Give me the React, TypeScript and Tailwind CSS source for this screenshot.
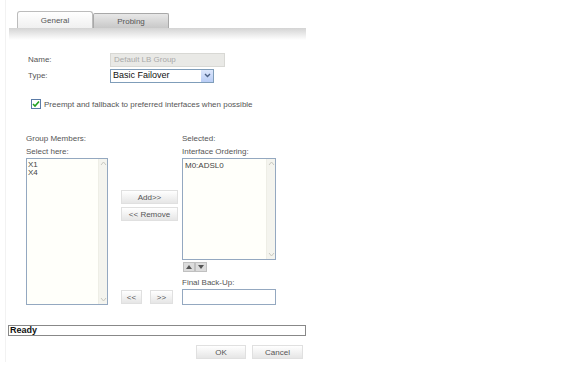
import React from 'react'

function Scrollbar() {
  return (
    <div className="flex flex-col w-[9px] bg-[#f4f4ee] border-l border-[#eeeee6]">
      <div className="h-[9px] flex items-center justify-center text-[#c8c8c0]">
        <svg width="7" height="5" viewBox="0 0 7 5"><path d="M1 4 L3.5 1 L6 4" stroke="currentColor" fill="none" /></svg>
      </div>
      <div className="flex-1" />
      <div className="h-[9px] flex items-center justify-center text-[#c8c8c0]">
        <svg width="7" height="5" viewBox="0 0 7 5"><path d="M1 1 L3.5 4 L6 1" stroke="currentColor" fill="none" /></svg>
      </div>
    </div>
  )
}

function Btn({ label, w }: { label: string; w: string }) {
  return (
    <div className={`${w} h-[14px] flex items-center justify-center border border-[#e0e0e0] bg-gradient-to-b from-white to-[#e6e6e6] text-[8px] text-[#555]`}>
      {label}
    </div>
  )
}

export default function App() {
  return (
    <div className="w-[576px] h-[387px] bg-white text-[#555] text-[8px] leading-[13px]" style={{ fontFamily: '"Liberation Sans", Arial, sans-serif' }}>
      <div className="w-[310px] ml-[5px] border-l border-[#f2f2f2] h-[362px]">
        {/* tabs */}
        <div className="flex items-end pt-[12px] pl-[11px] h-[28px]">
          <div className="w-[76px] h-[17px] rounded-t-[3px] border border-b-0 border-[#bcbcbc] bg-gradient-to-b from-white to-[#f0f0f0] flex items-center justify-center">
            General
          </div>
          <div className="w-[76px] h-[15px] rounded-t-[2px] border border-b-0 border-[#a8a8a8] bg-gradient-to-b from-[#e8e8e8] to-[#c8c8c8] flex items-center justify-center">
            Probing
          </div>
        </div>
        <div className="h-[12px] ml-[3px] w-[297px] bg-gradient-to-b from-[#d4d4d4] to-white" />

        {/* name / type */}
        <div className="pl-[22px] mt-[12px]">
          <div className="flex items-center h-[15px]">
            <div className="w-[82px]">Name:</div>
            <div className="w-[115px] h-[14px] bg-[#e9e9e6] border border-[#d8d8d4] text-[#aaa] pl-[3px] leading-[12px]">Default LB Group</div>
          </div>
          <div className="flex items-center h-[15px] mt-[1px]">
            <div className="w-[82px]">Type:</div>
            <div className="w-[104px] h-[14px] bg-white border border-[#7f9db9] flex items-center">
              <div className="flex-1 pl-[2px] text-[#111] text-[9px]">Basic Failover</div>
              <div className="w-[12px] h-[12px] bg-gradient-to-b from-[#dce6fb] to-[#b9cdf6] flex items-center justify-center text-[#4d6185]">
                <svg width="7" height="5" viewBox="0 0 7 5"><path d="M1 1 L3.5 3.5 L6 1" stroke="currentColor" strokeWidth="1.4" fill="none" /></svg>
              </div>
            </div>
          </div>
          <div className="flex items-center mt-[14px] pl-[3px] h-[14px]">
            <div className="w-[10px] h-[10px] border border-[#5a7aa6] bg-white flex items-center justify-center mr-[3px]">
              <svg width="8" height="8" viewBox="0 0 8 8"><path d="M1 4 L3 6 L7 1.5" stroke="#21a121" strokeWidth="1.6" fill="none" /></svg>
            </div>
            <div>Preempt and fallback to preferred interfaces when possible</div>
          </div>
        </div>

        {/* lists */}
        <div className="flex pl-[20px] mt-[21px]">
          <div className="w-[95px]">
            <div>Group Members:</div>
            <div>Select here:</div>
            <div className="w-[82px] h-[147px] border border-[#94a8c0] bg-[#fffffa] flex">
              <div className="flex-1 pl-[1px] leading-[8px] pt-[2px] text-[#444]">
                <div>X1</div>
                <div>X4</div>
              </div>
              <Scrollbar />
            </div>
          </div>
          <div className="w-[61px] flex flex-col pt-[58px]">
            <Btn label="Add>>" w="w-[57px]" />
            <div className="mt-[3px]"><Btn label="<< Remove" w="w-[57px]" /></div>
            <div className="mt-auto flex gap-[8px] mb-[1px]">
              <Btn label="<<" w="w-[21px]" />
              <Btn label=">>" w="w-[23px]" />
            </div>
          </div>
          <div className="w-[94px] flex flex-col">
            <div>Selected:</div>
            <div>Interface Ordering:</div>
            <div className="h-[102px] border border-[#94a8c0] bg-[#fffffa] flex">
              <div className="flex-1 pl-[2px] pt-[2px] leading-[10px] text-[#444]">M0:ADSL0</div>
              <Scrollbar />
            </div>
            <div className="flex mt-[2px] ml-[1px]">
              <div className="w-[12px] h-[10px] bg-[#dcdcdc] border border-[#c0c0c0] flex items-center justify-center text-[#555]">
                <svg width="6" height="4" viewBox="0 0 6 4"><path d="M0 4 L3 0 L6 4Z" fill="currentColor" /></svg>
              </div>
              <div className="w-[12px] h-[10px] bg-[#dcdcdc] border border-[#c0c0c0] flex items-center justify-center text-[#555]">
                <svg width="6" height="4" viewBox="0 0 6 4"><path d="M0 0 L6 0 L3 4Z" fill="currentColor" /></svg>
              </div>
            </div>
            <div className="mt-[4px]">Final Back-Up:</div>
            <div className="h-[16px] border border-[#94a8c0] bg-white" />
          </div>
        </div>

        {/* status */}
        <div className="mt-[20px] ml-[2px] w-[298px] h-[11px] border border-[#888] flex items-center pl-[1px] text-[9px] font-bold text-[#111]">
          Ready
        </div>
        <div className="flex justify-end gap-[6px] mt-[9px] w-[297px]">
          <Btn label="OK" w="w-[50px]" />
          <Btn label="Cancel" w="w-[51px]" />
        </div>
      </div>
    </div>
  )
}
